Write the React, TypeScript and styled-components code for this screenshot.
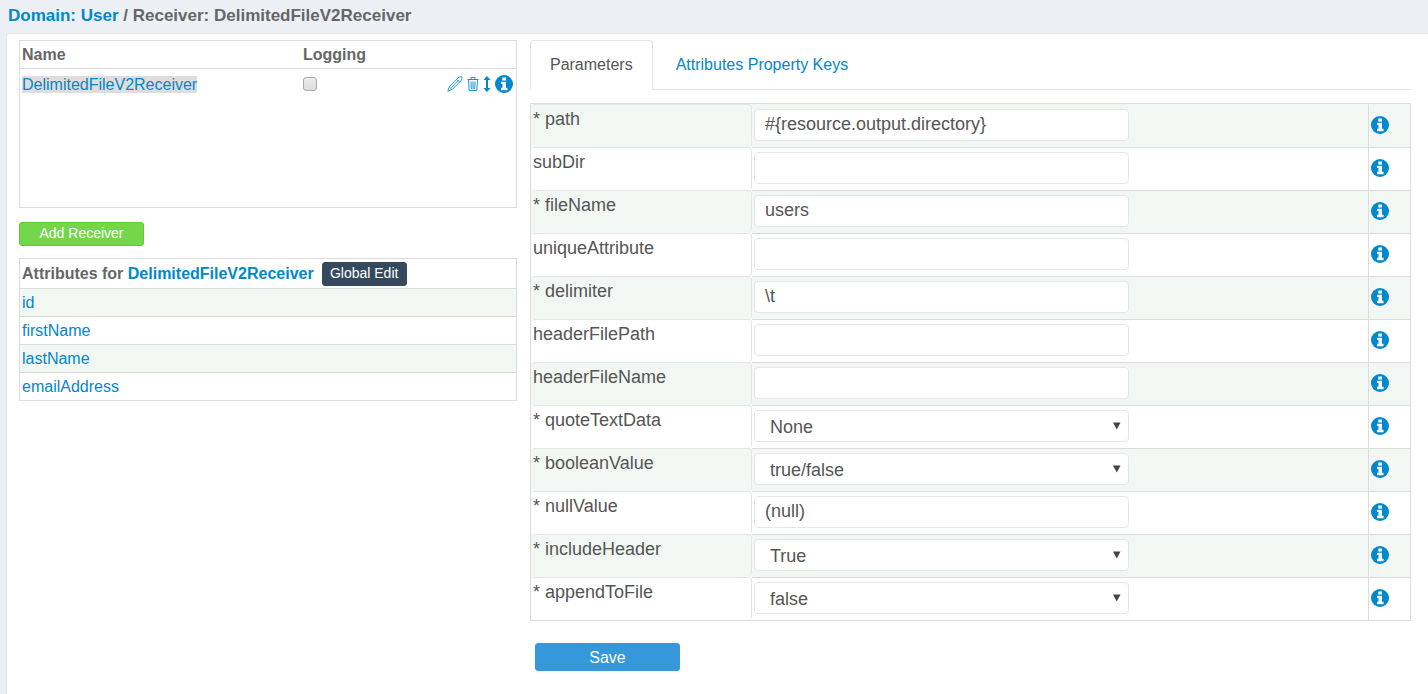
import React from 'react';
import styled, { createGlobalStyle, css } from 'styled-components';

const Global = createGlobalStyle`
  *, *::before, *::after { box-sizing: border-box; }
  body {
    margin: 0;
    background: #ecf0f5;
    color: #555;
    font: 16px/20px "Liberation Sans", Arial, sans-serif;
  }
  button, input, select { font-family: inherit; }
  a { color: #0088cc; text-decoration: none; }
`;

const Page = styled.div`
  display: flex;
  flex-direction: column;
  min-height: 100vh;
`;

const Title = styled.h1`
  margin: 0;
  padding: 4px 8px 5px;
  font-size: 17px;
  line-height: 24px;
  color: #666;
`;

const Panel = styled.main`
  flex: 1;
  display: grid;
  grid-template-columns: 13fr 23fr;
  column-gap: 13px;
  align-items: start;
  margin-left: 6px;
  padding: 6px 17px 23px 12px;
  background: #fff;
  border: solid #e4e6ea;
  border-width: 1px 0 0 1px;
  border-top-left-radius: 3px;
`;

const Section = styled.section`
  min-width: 0;
`;

const ReceiverBox = styled.div`
  height: 168px;
  border: 1px solid #dcdcdc;
`;

const ReceiverTable = styled.table`
  width: 100%;
  border-spacing: 0;
  table-layout: fixed;

  th, td { padding: 0 2px; text-align: left; }
  th { height: 28px; color: #666; border-bottom: 1px solid #dcdcdc; }
  td { height: 30px; }
`;

const NameCol = styled.col`
  width: 281px;
`;

const NameCell = styled.td`
  && { padding-top: 2px; }
`;

const Selected = styled.a`
  background: #e0dcdc;
`;

const Check = styled.input`
  appearance: none;
  display: block;
  width: 14px;
  height: 14px;
  margin: 0;
  border: 1px solid #aaa;
  border-radius: 3px;
  background: linear-gradient(#ececec, #dcdcdc);
`;

const Actions = styled.div`
  display: flex;
  justify-content: flex-end;
  align-items: center;
  gap: 4px;
  padding-right: 1px;
`;

const IconButton = styled.button`
  display: flex;
  padding: 0;
  border: 0;
  background: none;
  color: #0088cc;
  cursor: pointer;
`;

const Button = styled.button<{ $tone: 'green' | 'dark' | 'blue' }>`
  display: inline-block;
  padding: 0 0 2px;
  border: 1px solid;
  border-radius: 3px;
  height: 24px;
  color: #fff;
  font-size: 14px;
  cursor: pointer;
  ${({ $tone }) => $tone === 'green' && css`
    width: 125px;
    margin: 14px 0 12px;
    display: block;
    background: #75d64a;
    border-color: #62cc35;
  `}
  ${({ $tone }) => $tone === 'dark' && css`
    width: 85px;
    background: #34495e;
    border-color: #34495e;
  `}
  ${({ $tone }) => $tone === 'blue' && css`
    display: block;
    width: 145px;
    height: 28px;
    margin: 22px 0 0 5px;
    padding: 1px 0 0;
    background: #3498db;
    border-color: #3498db;
    font-size: 16px;
  `}
`;

const AttributeTable = styled.table`
  width: 100%;
  border: 1px solid #dcdcdc;
  border-spacing: 0;

  th, td { padding: 0 2px; text-align: left; }
  th { height: 29px; color: #666; }
  td { height: 28px; border-top: 1px solid #dcdcdc; }
  tbody tr:nth-child(odd) { background: #f3f7f4; }
`;

const AttributeHead = styled.div`
  display: flex;
  align-items: center;
  gap: 8px;
  padding-top: 1px;
`;

const Tabs = styled.nav`
  display: flex;
  height: 50px;
  border-bottom: 1px solid #e4e4e6;
`;

const Tab = styled.a<{ $active?: boolean }>`
  height: 50px;
  padding: 14px 19px;
  border: 1px solid transparent;
  margin-right: 3px;
  ${({ $active }) => $active && css`
    color: #555;
    background: #fff;
    border-color: #e4e4e6;
    border-bottom-color: #fff;
    border-radius: 4px 4px 0 0;
  `}
`;

const ParamTable = styled.table`
  width: 100%;
  margin-top: 13px;
  border: 1px solid #dcdcdc;
  border-spacing: 0;
  table-layout: fixed;

  td {
    height: 43px;
    padding: 4px 2px 0;
    vertical-align: top;
    border-top: 1px solid #dcdcdc;
  }
  tr:nth-child(odd) > td { background: #f3f7f4; }
  tr:first-child > td:not(:first-child) { border-top-color: #f3f7f4; }
`;

const LabelCol = styled.col`
  width: 221px;
`;

const InfoCol = styled.col`
  width: 42px;
`;

const LabelCell = styled.td`
  && {
    border-top-color: #e4e6e7;
    border-right: 1px solid #e4e6e7;
    border-radius: 4px 4px 4px 0;
  }
  font-size: 18px;
`;

const InfoCell = styled.td`
  && {
    padding-top: 11px;
    border-left: 1px solid #dcdcdc;
  }
`;

const field = css`
  appearance: none;
  display: block;
  width: 375px;
  max-width: 100%;
  height: 32px;
  border: 1px solid #e5e6e7;
  border-radius: 4px;
  background: #fff;
  color: #555;
  font-size: 18px;
  line-height: 22px;
`;

const TextField = styled.input`
  ${field}
  padding: 0 10px 2px;
`;

const SelectWrap = styled.div`
  display: grid;
  width: 375px;
  max-width: 100%;
  align-items: center;
  > * { grid-area: 1 / 1; }
  > svg { justify-self: end; margin-right: 8px; pointer-events: none; }
`;

const SelectField = styled.select`
  ${field}
  padding: 2px 24px 0 15px;
`;

const InfoIcon = () => (
  <svg width="18" height="18" viewBox="0 0 18 18" aria-hidden="true">
    <circle cx="9" cy="9" r="9" fill="#0088cc" />
    <path fill="#fff" d="M7.300 2.500h3.700v3H7.300zM6 6.800h5v6h1.500V15.200H6v-2.400h1.500V9H6z" />
  </svg>
);

const PencilIcon = () => (
  <svg width="16" height="16" viewBox="0 0 16 16" fill="none" stroke="currentColor" aria-hidden="true">
    <path d="M.8 15.200l1.400-4.200L10.800 2Q12.500.3 14.800.8 15.500 3 14 4.800L5 13.500zM2.200 11L5 13.500M9.600 3.200l3 3M4 11.700l7.500-7.500" strokeWidth=".8" />
  </svg>
);

const TrashIcon = () => (
  <svg width="12" height="14" viewBox="0 0 12 14" fill="none" stroke="currentColor" aria-hidden="true">
    <path d="M.5 2.500h11M4 2.500v-2h4v2M1.500 3l.7 10.500h7.600l.7-10.500M4 4.500l.3 7.500M6 4.500v7.500M8 4.500l-.3 7.500" strokeWidth=".9" />
  </svg>
);

const MoveIcon = () => (
  <svg width="8" height="16" viewBox="0 0 8 16" fill="currentColor" aria-hidden="true">
    <path d="M4 0l3.500 4H5v8h2.500L4 16 .5 12H3V4H.5z" />
  </svg>
);

const Caret = () => (
  <svg width="8" height="8" viewBox="0 0 8 8" aria-hidden="true">
    <path d="M0 .5h7.500L3.750 7.500z" fill="#444" />
  </svg>
);

type Param = { name: string; required?: boolean; value?: string; options?: string[] };

const params: Param[] = [
  { name: 'path', required: true, value: '#{resource.output.directory}' },
  { name: 'subDir' },
  { name: 'fileName', required: true, value: 'users' },
  { name: 'uniqueAttribute' },
  { name: 'delimiter', required: true, value: '\\t' },
  { name: 'headerFilePath' },
  { name: 'headerFileName' },
  { name: 'quoteTextData', required: true, options: ['None'] },
  { name: 'booleanValue', required: true, options: ['true/false'] },
  { name: 'nullValue', required: true, value: '(null)' },
  { name: 'includeHeader', required: true, options: ['True'] },
  { name: 'appendToFile', required: true, options: ['false'] },
];

const attributes = ['id', 'firstName', 'lastName', 'emailAddress'];

function ParamRow({ name, required, value, options }: Param) {
  return (
    <tr>
      <LabelCell>
        <label htmlFor={name}>{required ? `* ${name}` : name}</label>
      </LabelCell>
      <td>
        {options ? (
          <SelectWrap>
            <SelectField id={name}>
              {options.map((o) => <option key={o}>{o}</option>)}
            </SelectField>
            <Caret />
          </SelectWrap>
        ) : (
          <TextField id={name} type="text" defaultValue={value} />
        )}
      </td>
      <InfoCell>
        <IconButton type="button" aria-label={`About ${name}`}><InfoIcon /></IconButton>
      </InfoCell>
    </tr>
  );
}

export default function App() {
  return (
    <Page>
      <Global />
      <Title><a href="#domain">Domain: User</a> / Receiver: DelimitedFileV2Receiver</Title>
      <Panel>
        <Section>
          <ReceiverBox>
            <ReceiverTable>
              <colgroup><NameCol /><col /><col /></colgroup>
              <thead>
                <tr><th>Name</th><th id="logging">Logging</th><th /></tr>
              </thead>
              <tbody>
                <tr>
                  <NameCell><Selected href="#receiver">DelimitedFileV2Receiver</Selected></NameCell>
                  <td><Check type="checkbox" aria-labelledby="logging" /></td>
                  <td>
                    <Actions>
                      <IconButton type="button" aria-label="Edit"><PencilIcon /></IconButton>
                      <IconButton type="button" aria-label="Delete"><TrashIcon /></IconButton>
                      <IconButton type="button" aria-label="Move"><MoveIcon /></IconButton>
                      <IconButton type="button" aria-label="Info"><InfoIcon /></IconButton>
                    </Actions>
                  </td>
                </tr>
              </tbody>
            </ReceiverTable>
          </ReceiverBox>
          <Button type="button" $tone="green">Add Receiver</Button>
          <AttributeTable>
            <thead>
              <tr>
                <th>
                  <AttributeHead>
                    <span>Attributes for <a href="#receiver">DelimitedFileV2Receiver</a></span>
                    <Button type="button" $tone="dark">Global Edit</Button>
                  </AttributeHead>
                </th>
              </tr>
            </thead>
            <tbody>
              {attributes.map((a) => <tr key={a}><td><a href={`#${a}`}>{a}</a></td></tr>)}
            </tbody>
          </AttributeTable>
        </Section>
        <Section>
          <Tabs>
            <Tab href="#parameters" $active>Parameters</Tab>
            <Tab href="#keys">Attributes Property Keys</Tab>
          </Tabs>
          <ParamTable>
            <colgroup><LabelCol /><col /><InfoCol /></colgroup>
            <tbody>
              {params.map((p) => <ParamRow key={p.name} {...p} />)}
            </tbody>
          </ParamTable>
          <Button type="submit" $tone="blue">Save</Button>
        </Section>
      </Panel>
    </Page>
  );
}
